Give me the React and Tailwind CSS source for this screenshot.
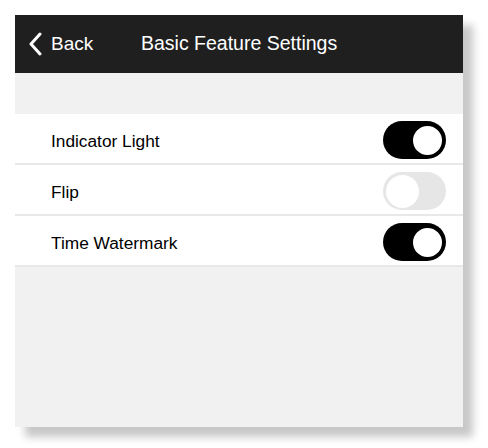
import React, { useState } from "react";

function Toggle({ on, onChange }) {
  return (
    <button
      onClick={onChange}
      className={`relative w-[63px] h-[38px] rounded-full ${on ? "bg-black" : "bg-[#e6e6e6]"}`}
    >
      <span
        className={`absolute w-[33px] h-[33px] rounded-full bg-white ${
          on ? "right-[2px] top-[2.5px] border-2 border-black" : "left-[3px] top-[2.5px]"
        }`}
      />
    </button>
  );
}

export default function App() {
  const [settings, setSettings] = useState([
    { label: "Indicator Light", on: true },
    { label: "Flip", on: false },
    { label: "Time Watermark", on: true },
  ]);

  const toggle = (idx) =>
    setSettings((prev) => prev.map((s, i) => (i === idx ? { ...s, on: !s.on } : s)));

  return (
    <div
      className="w-[488px] h-[448px] bg-white pt-[15px] pl-[15px]"
      style={{ fontFamily: '"Liberation Sans", Arial, sans-serif' }}
    >
      <div className="w-[448px] h-[412px] bg-[#f0f1f0] flex flex-col shadow-[10px_10px_8px_rgba(0,0,0,0.22)]">
        <div className="h-[58px] bg-[#1f1f20] flex items-center text-white shrink-0">
          <div className="flex items-center pl-[12px] w-[126px]">
            <svg width="18" height="24" viewBox="0 0 18 24" className="mr-[6px]">
              <path d="M13 2 L4 12 L13 22" fill="none" stroke="white" strokeWidth="3" strokeLinecap="round" strokeLinejoin="round" />
            </svg>
            <span className="text-[19px]">Back</span>
          </div>
          <span className="text-[19.5px]">Basic Feature Settings</span>
        </div>
        <div className="h-[41px]" />
        <div className="bg-white">
          {settings.map((s, idx) => (
            <div
              key={s.label}
              className="h-[51px] flex items-center justify-between pt-[3px] pl-[36px] pr-[17px] border-b-2 border-[#e8e8e8]"
            >
              <span className="text-[17.3px] text-black pt-[3px]">{s.label}</span>
              <Toggle on={s.on} onChange={() => toggle(idx)} />
            </div>
          ))}
        </div>
      </div>
    </div>
  );
}
